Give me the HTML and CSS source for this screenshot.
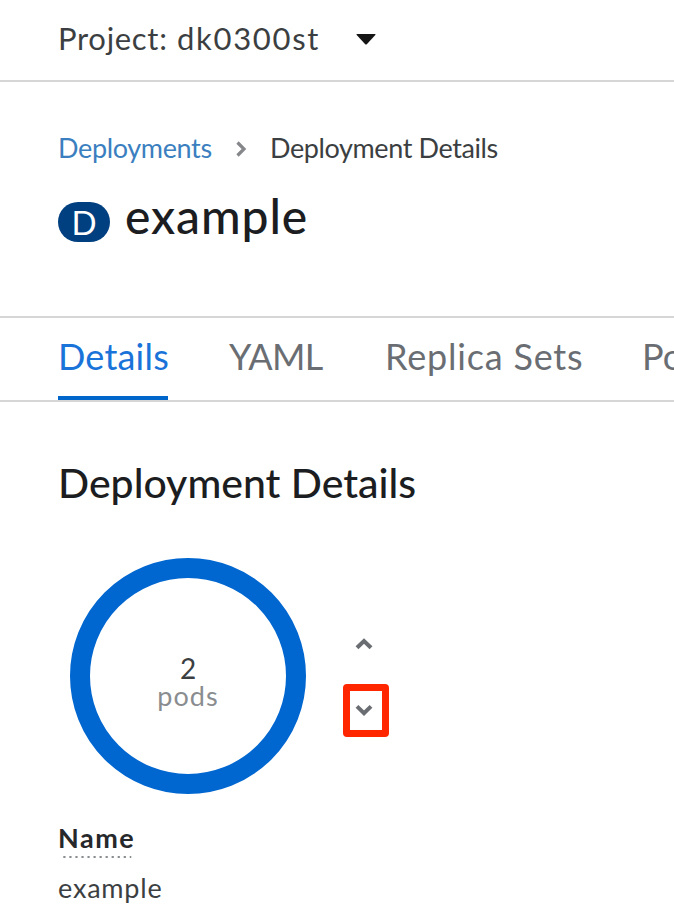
FILE: index.html
```
<!DOCTYPE html>
<html lang="en">
<head>
<meta charset="utf-8">
<title>example · Deployment Details</title>
<link rel="stylesheet" href="styles.css">
</head>
<body>
<header class="project-bar">
  <span class="project-prefix">Project:</span>
  <span class="project-name">dk0300st</span>
  <svg class="caret" width="20" height="11" viewBox="0 0 20 11"><path d="M1 0h18q1 0 .3 1L11 10q-1 1-2 0L.7 1Q0 0 1 0z" fill="#151515"/></svg>
</header>
<section class="heading">
  <nav class="breadcrumb">
    <a class="crumb-link">Deployments</a>
    <svg class="crumb-sep" width="12" height="16" viewBox="0 0 12 16"><path d="M2.5 1.5L9 8l-6.5 6.5" fill="none" stroke="#85878a" stroke-width="3.2"/></svg>
    <span class="crumb-current">Deployment Details</span>
  </nav>
  <h1 class="title"><span class="badge">D</span><span>example</span></h1>
</section>
<nav class="tabs">
  <a class="tab tab-active">Details</a>
  <a class="tab tab-yaml">YAML</a>
  <a class="tab tab-replicas">Replica Sets</a>
  <a class="tab">Pods</a>
</nav>
<main class="content">
  <h2 class="section-title">Deployment Details</h2>
  <div class="scaler">
    <div class="donut">
      <span class="count">2</span>
      <span class="unit">pods</span>
    </div>
    <div class="controls">
      <button class="step step-up" aria-label="Increase"><svg class="chevron" width="20" height="14" viewBox="0 0 20 14"><path d="M3 10.8l7-6.8 7 6.8" fill="none" stroke="#6a6e73" stroke-width="4"/></svg></button>
      <button class="step step-down" aria-label="Decrease"><svg class="chevron" width="20" height="14" viewBox="0 0 20 14"><path d="M3 2.4l7 6.8 7-6.8" fill="none" stroke="#6a6e73" stroke-width="4"/></svg></button>
    </div>
  </div>
  <dl class="fields">
    <dt class="field-name">Name</dt>
    <dd class="field-dots"><svg class="dots" width="70" height="4" viewBox="0 0 70 4"><path d="M1.3 2h68" stroke="#8a8d90" stroke-width="2.2" stroke-dasharray="2.2 3.84"/></svg></dd>
    <dd class="field-value">example</dd>
  </dl>
</main>
</body>
</html>
```

FILE: styles.css
```
* { box-sizing: border-box; }
body {
  margin: 0;
  height: 916px;
  overflow: hidden;
  background: #fff;
  color: #3c3f42;
  font-family: Lato, "Liberation Sans", sans-serif;
  font-size: 27px;
}
h1, h2, dl, dd { margin: 0; }

.project-bar {
  display: flex;
  align-items: center;
  height: 82px;
  padding: 0 0 4px 58px;
  border-bottom: 2px solid #d6d6d6;
  font-size: 31px;
  line-height: 76px;
}
.project-prefix { width: 119px; letter-spacing: 0.7px; }
.project-name { width: 179px; letter-spacing: 1.7px; }
.caret { margin-top: 2px; }

.heading { height: 234px; padding: 48px 0 0 58px; }
.breadcrumb {
  display: flex;
  align-items: center;
  height: 36px;
  line-height: 36px;
}
.crumb-link { width: 177px; color: #3b7fc0; letter-spacing: -0.35px; }
.crumb-sep { margin: 2px 23px 0 0; }
.crumb-current { letter-spacing: -0.4px; }

.title {
  display: flex;
  height: 60px;
  margin-top: 20px;
  color: #1b1d21;
  font-size: 48px;
  font-weight: 500;
  line-height: 60px;
  letter-spacing: 0.9px;
}
.badge {
  width: 52px;
  height: 40px;
  margin: 16px 15px 0 0;
  border-radius: 20px;
  background: #004080;
  color: #fff;
  font-size: 33px;
  font-weight: 400;
  line-height: 40px;
  letter-spacing: 0;
  text-align: center;
}

.tabs {
  display: flex;
  height: 86px;
  padding-left: 58px;
  border-top: 2px solid #d6d6d6;
  border-bottom: 2px solid #d6d6d6;
  color: #6a6e73;
  font-size: 36px;
  line-height: 77px;
  white-space: nowrap;
}
.tab { flex: none; height: 82px; }
.tab-active {
  width: 110px;
  margin-right: 61px;
  border-bottom: 4px solid #06c;
  color: #1a73d9;
  letter-spacing: 0.2px;
}
.tab-yaml { width: 156px; letter-spacing: -0.7px; }
.tab-replicas { width: 257px; letter-spacing: 0.8px; }

.content { padding: 57px 0 0 58px; }
.section-title {
  height: 48px;
  color: #1b1d21;
  font-size: 41px;
  font-weight: 500;
  line-height: 48px;
}
.scaler { display: flex; margin-top: 51px; }
.donut {
  width: 236px;
  height: 236px;
  margin-left: 12px;
  padding-top: 76px;
  border: 20px solid #0066d0;
  border-radius: 50%;
  text-align: center;
}
.count { display: block; height: 28px; font-size: 28px; line-height: 28px; }
.unit { display: block; height: 28px; line-height: 28px; color: #8a8d90; letter-spacing: 1.1px; }
.controls { display: flex; flex-direction: column; padding: 66px 0 0 37px; }
.step {
  display: flex;
  align-items: center;
  justify-content: center;
  width: 46px;
  padding: 0;
  border: 0;
  background: none;
}
.step-up { height: 40px; }
.step-down { height: 53px; margin-top: 20px; border: 7px solid #ff2600; border-radius: 4px; }
.chevron { flex: none; margin-right: 4px; }

.fields { margin-top: 28px; }
.field-name { height: 32px; color: #26282b; font-weight: 700; line-height: 32px; letter-spacing: 1.5px; }
.field-dots { height: 5px; padding: 1px 0 0 4px; }
.dots { display: block; }
.field-value { height: 32px; margin-top: 13px; line-height: 32px; letter-spacing: 0.8px; }
```
